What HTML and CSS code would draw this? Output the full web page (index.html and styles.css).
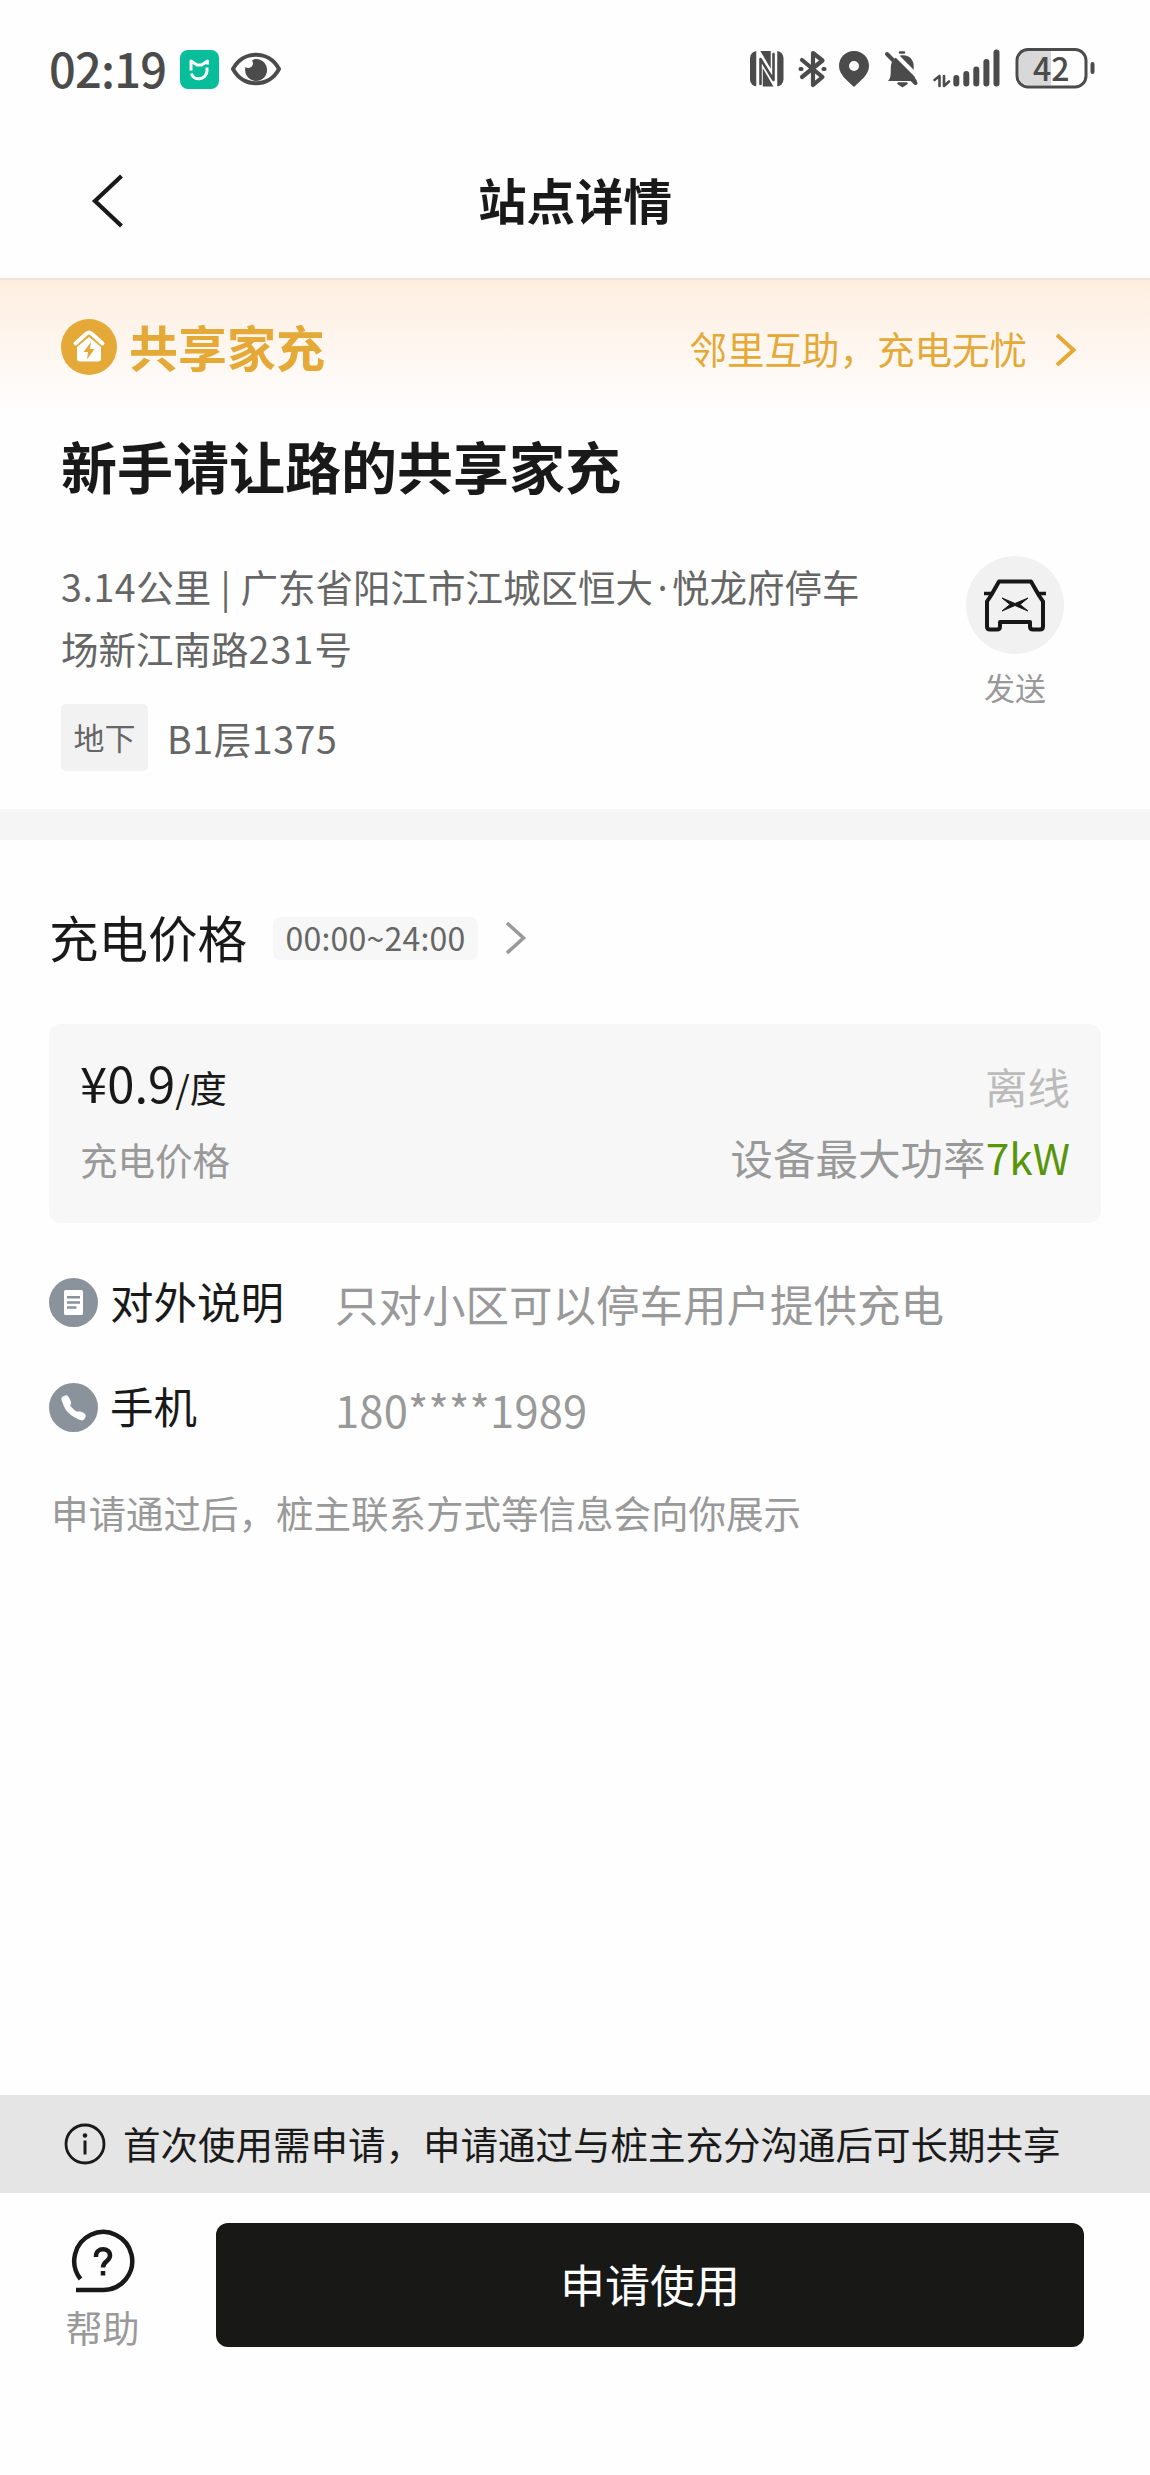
FILE: index.html
```html
<!DOCTYPE html>
<html lang="zh-CN">
<head>
<meta charset="utf-8">
<title>站点详情</title>
<link rel="stylesheet" href="styles.css">
</head>
<body>
<div class="screen">
  <div class="status">
    <span class="clock">02:19</span>
    <svg class="mi" width="39" height="39" viewBox="0 0 39 39"><rect width="39" height="39" rx="8" fill="#07bd9a"/><path d="M11 20.500V11l6 4h4.500L27.500 11v3.500" fill="none" stroke="#fff" stroke-width="3" stroke-linejoin="round"/><path d="M11.500 23.500c1.500 7.500 14.500 7.500 15.500-2.500v-3.500" fill="none" stroke="#fff" stroke-width="3"/></svg>
    <svg class="eye" width="50" height="34" viewBox="0 0 50 34"><path d="M2 17C12-2 38-2 48 17C38 36 12 36 2 17Z" fill="none" stroke="#4b4b4b" stroke-width="4"/><path d="M25 7a11 11 0 1 1-10.500 8c3 3 10-1 6.500-6.500 1-.8 2.500-1.500 4-1.500Z" fill="#4b4b4b"/></svg>
    <span class="grow"></span>
    <svg class="sys" width="350" height="44" viewBox="748 46 350 44" fill="none" stroke="#4b4b4b" stroke-linecap="round" stroke-linejoin="round">
      <rect x="750" y="51" width="33.500" height="35.500" rx="7" fill="#4b4b4b" stroke="none"/>
      <path d="M759.500 87V56l14.500 25V51" stroke="#fff" stroke-width="6.500" stroke-linecap="butt" stroke-linejoin="miter"/>
      <path d="M760.500 84V59l13 21V54" stroke="#4b4b4b" stroke-width="2.600"/>
      <path d="M802 60l20.500 17-9.500 8V53l9.500 7.500L802 77M800.500 69h1M823.500 69h1" stroke-width="4.200"/>
      <path d="M854 51c9 0 15 7 15 15 0 9-9 15-15 21-6-6-15-12-15-21 0-8 6-15 15-15Zm0 10a5 5 0 1 0 0 10 5 5 0 0 0 0-10Z" fill="#4b4b4b" fill-rule="evenodd" stroke="none"/>
      <path d="M888 81c5-5 1-14 4-19 4-8 16-9 20-2 4 6-1 14 5 21Z" fill="#4b4b4b" stroke="none"/>
      <path d="M900 52.500h4M898.500 83.500h8l-4 2.500Z" fill="#4b4b4b" stroke-width="2.500"/>
      <path d="M890 49l29 29" stroke="#fff" stroke-width="4"/><path d="M887 54l28.500 29" stroke-width="4"/>
      <path d="M934.500 80l5-4v10M944 76v10l5-4.500" stroke-width="2.600"/>
      <path d="M956.300 78v5.500M966.300 74v9.500M976.300 69.500v14M986.400 62v21.500M996.500 52.500v31" stroke-width="6"/>
      <path d="M1028 51h23v34h-23q-9 0-9-9V60q0-9 9-9Z" fill="#d8d8d8" stroke="none"/>
      <rect x="1017" y="49.500" width="69" height="37.500" rx="11" stroke-width="3"/>
      <path d="M1092.500 64v8" stroke-width="4"/>
      <text x="1033" y="80.500" class="batt">42</text>
    </svg>
  </div>
  <header class="nav">
    <svg class="back" width="34" height="54" viewBox="0 0 34 54"><path d="M30.500 2L4 27l26.500 25" fill="none" stroke="#191919" stroke-width="4.200"/></svg>
    <h1 class="nav-title">站点详情</h1>
  </header>
  <section class="banner">
    <svg width="56" height="56" viewBox="0 0 56 56"><circle cx="28" cy="28" r="28" fill="#e4a936"/><path d="M14.500 24.500L25.500 14.500q2.500-2 5 0L41.500 24.500" fill="none" stroke="#fff" stroke-width="4" stroke-linecap="round" stroke-linejoin="round"/><path d="M28 18l12 10v11.500q0 3-3 3H19q-3 0-3-3V28Z" fill="#fff"/><path d="M30 23l-7.500 10h4.500l-1 7.500L33.500 30H29Z" fill="#e4a936"/></svg>
    <span class="brand">共享家充</span>
    <span class="grow"></span>
    <span class="slogan">邻里互助，充电无忧</span>
    <svg class="chev" width="22" height="34" viewBox="0 0 22 34"><path d="M2 2l16.500 15L2 32" fill="none" stroke="#e4a936" stroke-width="4"/></svg>
  </section>
  <section class="site">
    <h2 class="site-name">新手请让路的共享家充</h2>
    <div class="site-row">
      <div class="site-info">
        <p class="address"><span class="dist">3.14</span>公里<span class="bar"> | </span>广东省阳江市江城区恒大<span class="dot">·</span>悦龙府停车<br>场新江南路<span class="num">231</span>号</p>
        <div class="place"><span class="tag">地下</span><span class="spot">B1层1375</span></div>
      </div>
      <div class="send">
        <div class="send-disc"><svg width="64" height="54" viewBox="0 0 64 54" fill="none" stroke="#171717" stroke-width="4" stroke-linejoin="round"><path d="M16 3.500h32l8 14 4 6v25q0 3-3 3h-7q-3 0-3-3v-4.500H17v4.500q0 3-3 3H7q-3 0-3-3v-25l4-6Z"/><path d="M1 15.500h8M55 15.500h8" stroke-width="3.500"/><path d="M19 20l13 5.500L45 20l-8 6.500 8 6.500-13-5.500L19 33l8-6.500Z" fill="#171717" stroke-width="1"/></svg></div>
        <span class="send-text">发送</span>
      </div>
    </div>
  </section>
  <div class="divider"></div>
  <section class="price">
    <div class="price-head">
      <h3 class="price-title">充电价格</h3>
      <span class="hours">00:00~24:00</span>
      <svg width="22" height="34" viewBox="0 0 22 34"><path d="M2 2l16.500 15L2 32" fill="none" stroke="#999" stroke-width="3.600"/></svg>
    </div>
    <div class="card">
      <div class="card-left">
        <div class="amount">¥0.9<small class="unit">/度</small></div>
        <div class="amount-label">充电价格</div>
      </div>
      <div class="card-right">
        <div class="offline">离线</div>
        <div class="power">设备最大功率<b class="kw">7kW</b></div>
      </div>
    </div>
    <div class="row">
      <svg width="49" height="49" viewBox="0 0 49 49"><circle cx="24.500" cy="24.500" r="24.500" fill="#8a929c"/><rect x="15" y="12" width="19" height="25" rx="1.500" fill="#fff"/><path d="M18 19.300h13M18 24.500h13M18 29.500h9.500" stroke="#8a929c" stroke-width="2.400"/></svg>
      <span class="row-name">对外说明</span><span class="row-value">只对小区可以停车用户提供充电</span>
    </div>
    <div class="row">
      <svg width="49" height="49" viewBox="0 0 49 49"><circle cx="24.500" cy="24.500" r="24.500" fill="#8a929c"/><path d="M16.500 17C16.500 24 24 32.500 32.500 33" fill="none" stroke="#fff" stroke-width="6" stroke-linecap="round"/><path d="M16.500 16.500l1.500 3M30.500 32.500l2 .8" stroke="#fff" stroke-width="8" stroke-linecap="round"/></svg>
      <span class="row-name">手机</span><span class="row-value phone">180****1989</span>
    </div>
    <p class="note">申请通过后，桩主联系方式等信息会向你展示</p>
  </section>
  <footer class="foot">
    <div class="notice">
      <svg width="42" height="42" viewBox="0 0 42 42"><circle cx="21" cy="21" r="19" fill="none" stroke="#1a1a1a" stroke-width="2.800"/><circle cx="21" cy="12.500" r="2.300" fill="#1a1a1a"/><path d="M21 17.500v14" stroke="#1a1a1a" stroke-width="3"/></svg>
      <span class="notice-text">首次使用需申请，申请通过与桩主充分沟通后可长期共享</span>
    </div>
    <div class="actions">
      <div class="help">
        <svg width="64" height="64" viewBox="0 0 64 64" fill="none" stroke="#191919" stroke-width="4.500"><path d="M9.500 50A29 29 0 1 1 32 61H5"/><path d="M25 28v-1c0-9 14-9 14-.5 0 6-7 5.500-7 12M32 42v4.500"/></svg>
        <span class="help-text">帮助</span>
      </div>
      <button class="apply">申请使用</button>
    </div>
  </footer>
</div>
</body>
</html>
```
FILE: styles.css
```css
* { box-sizing: border-box; margin: 0; padding: 0; }
body { background: #fefefe; font-family: "Noto Sans CJK SC", "Noto Sans", sans-serif; color: #191919; }
svg { display: block; flex: none; }
.screen { width: 1150px; height: 2475px; display: flex; flex-direction: column; overflow: hidden; white-space: nowrap; }
.grow { flex: 1; }
.status { height: 138px; padding: 0 52px 0 49px; display: flex; align-items: center; }
.clock { width: 131px; margin-top: -3px; font-size: 47px; line-height: 60px; font-weight: 500; letter-spacing: -0.8px; color: #4b4b4b; }
.eye { margin-left: 12px; }
.sys { margin-top: -2px; }
.batt { font-size: 32px; font-weight: 500; fill: #4b4b4b; stroke: none; }
.nav { height: 142px; padding: 0 91px; display: flex; align-items: center; border-bottom: 2px solid #efe2d8; }
.back { margin-top: -14px; }
.nav-title { flex: 1; padding-right: 34px; margin-top: -19px; text-align: center; font-size: 48.500px; line-height: 72px; font-weight: 700; }
.banner { height: 134px; padding: 0 73px 0 61px; display: flex; align-items: center; background: linear-gradient(#feeee0, #fefefe); }
.brand { margin: -3px 0 0 12px; font-size: 49px; line-height: 60px; font-weight: 700; color: #e4a936; }
.slogan { margin-top: 2px; font-size: 37.500px; line-height: 60px; color: #e4a936; }
.chev { margin: 6px 0 0 28px; }
.site { height: 395px; padding: 10px 0 0 61px; }
.site-name { font-size: 56px; line-height: 82px; font-weight: 700; }
.site-row { display: flex; justify-content: space-between; padding: 50px 86px 0 0; }
.address { margin-top: -1px; font-size: 37.500px; line-height: 62px; color: #666; }
.dist { letter-spacing: 0.6px; }
.bar { letter-spacing: 0.8px; }
.dot { display: inline-block; width: 19px; text-align: center; font-family: "Noto Sans", sans-serif; line-height: 1; }
.num { letter-spacing: 1.2px; }
.place { display: flex; align-items: center; margin-top: 25px; }
.tag { width: 87px; height: 67px; border-radius: 5px; background: #f2f2f2; font-size: 31px; line-height: 66px; text-align: center; color: #666; }
.spot { margin-left: 19px; font-size: 37.500px; line-height: 66px; letter-spacing: 0.6px; color: #666; }
.send { width: 98px; display: flex; flex-direction: column; align-items: center; }
.send-disc { width: 98px; height: 98px; border-radius: 50%; background: #f1f1f1; display: flex; align-items: center; justify-content: center; }
.send-text { margin-top: 10px; font-size: 31px; line-height: 46px; color: #999; }
.divider { height: 31px; background: #f5f5f5; }
.price { flex: 1; padding: 62px 49px 0; }
.price-head { display: flex; align-items: center; height: 72px; }
.price-title { margin-top: -3px; font-size: 49.500px; line-height: 72px; font-weight: 400; }
.hours { width: 205px; height: 43px; margin: 0 27px 0 26px; border-radius: 8px; background: #f7f7f7; font-size: 32px; line-height: 41px; letter-spacing: 0.2px; text-align: center; color: #666; }
.card { height: 199px; margin-top: 50px; padding: 19px 31px; border-radius: 12px; background: #f7f7f7; display: flex; justify-content: space-between; }
.amount { font-size: 49px; line-height: 78px; }
.unit { font-size: 37px; }
.amount-label { margin-top: -5px; font-size: 37.500px; line-height: 76px; color: #999; }
.card-right { padding-top: 7px; text-align: right; font-size: 42.500px; line-height: 71px; color: #999; }
.offline { color: #bbb; }
.kw { font-weight: 400; color: #57950a; }
.row { display: flex; align-items: center; height: 49px; margin-top: 56px; }
.card + .row { margin-top: 55px; }
.row-name { width: 225px; margin: -4px 0 0 12px; font-size: 43.500px; line-height: 49px; }
.row-value { margin-top: 2px; font-size: 43.500px; line-height: 49px; color: #999; }
.phone { margin-top: 3px; letter-spacing: 0.2px; }
.note { margin-top: 50px; padding-left: 2px; font-size: 37.500px; line-height: 60px; color: #999; }
.foot { height: 380px; }
.notice { height: 98px; padding-left: 64px; display: flex; align-items: center; gap: 17px; background: #e5e5e5; }
.notice-text { margin-top: -3px; font-size: 37.500px; line-height: 60px; color: #1a1a1a; }
.actions { display: flex; padding: 30px 66px 0 66px; }
.help { width: 73px; padding-top: 6px; display: flex; flex-direction: column; align-items: center; }
.help-text { margin-top: 7px; font-size: 37px; line-height: 54px; color: #999; }
.apply { flex: 1; height: 124px; margin-left: 77px; padding-bottom: 2px; border: 0; border-radius: 12px; background: #181816; color: #fff; font-family: inherit; font-size: 45px; line-height: 120px; }
```
